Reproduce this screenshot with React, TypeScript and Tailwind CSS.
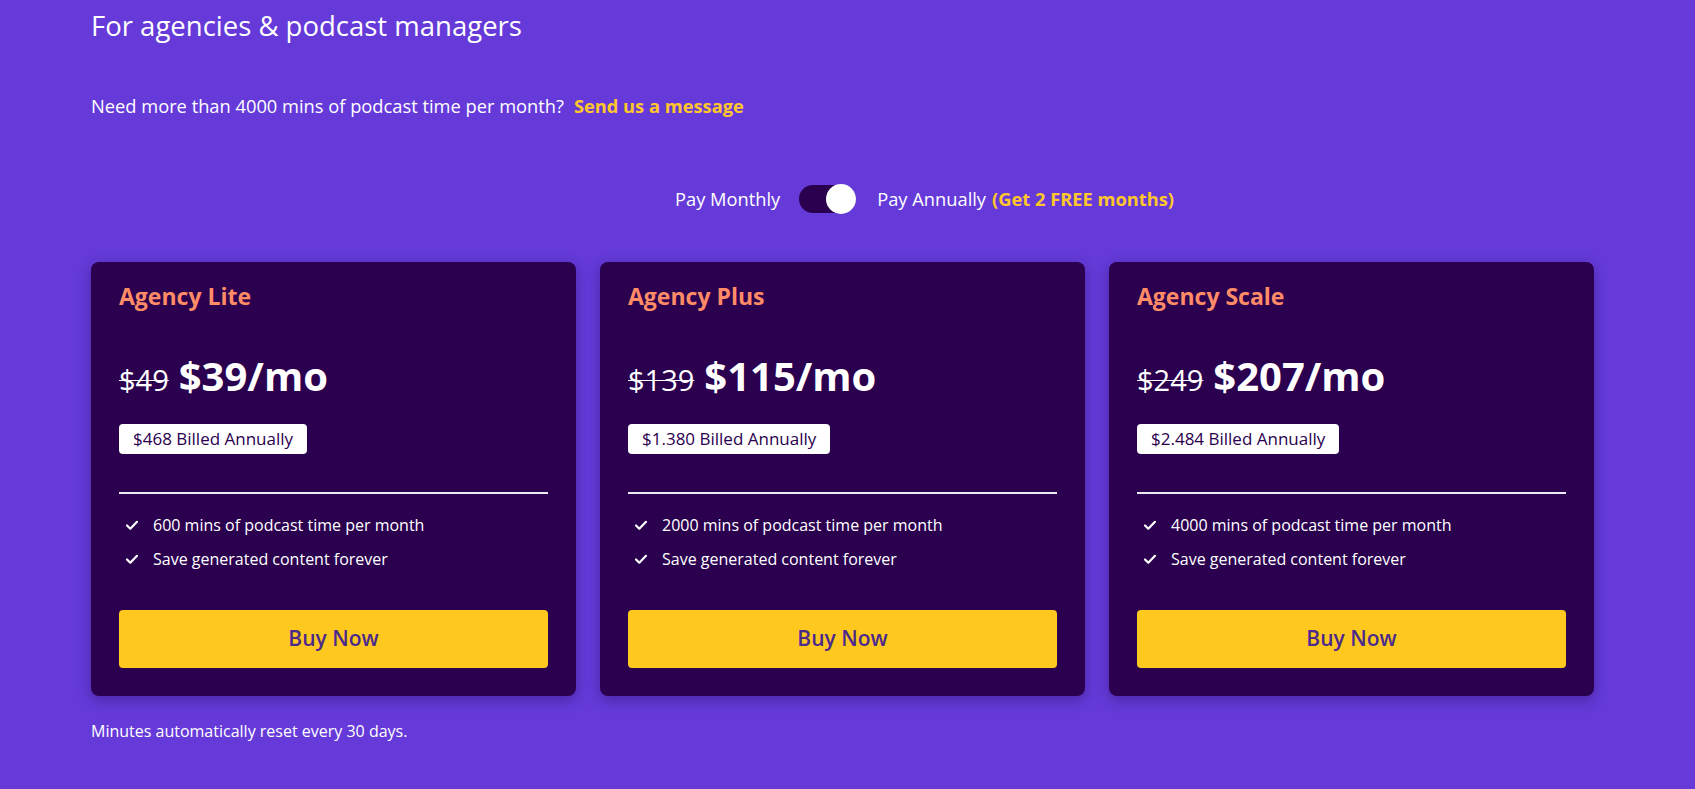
const plans = [
  { name: "Agency Lite", old: "$49", price: "$39/mo", billed: "$468 Billed Annually", mins: "600" },
  { name: "Agency Plus", old: "$139", price: "$115/mo", billed: "$1.380 Billed Annually", mins: "2000" },
  { name: "Agency Scale", old: "$249", price: "$207/mo", billed: "$2.484 Billed Annually", mins: "4000" },
]

function CheckIcon() {
  return (
    <svg width="14" height="14" viewBox="0 0 14 14" fill="none" className="shrink-0">
      <path d="M2 7.5l3.3 3.2L12 3.8" stroke="white" strokeWidth="2.2" strokeLinecap="round" strokeLinejoin="round" />
    </svg>
  )
}

export default function App() {
  return (
    <div className="min-h-screen w-full bg-[#653ad9] text-white font-['Open_Sans','Lato',sans-serif] pb-12">
      <div className="ml-[91px] w-[1503px] pt-2">

        {/* HEADER */}
        <h1 className="text-[27.5px] leading-[36px] font-normal">For agencies &amp; podcast managers</h1>

        <p className="mt-12 text-[18.3px] leading-7">
          Need more than 4000 mins of podcast time per month?
          <a href="#" className="ml-2.5 font-bold text-[#ffc72c]">Send us a message</a>
        </p>

        {/* TOGGLE */}
        <div className="mt-[64px] flex items-center pl-[584px] text-[18.3px] leading-[30px]">
          <span>Pay Monthly</span>
          <div className="relative ml-[19px] h-7 w-[57px] rounded-full bg-[#2a004f]">
            <div className="absolute -top-px right-0 h-[30px] w-[30px] rounded-full bg-white"></div>
          </div>
          <span className="ml-[21px]">Pay Annually</span>
          <span className="ml-1.5 font-bold text-[#ffc72c]">(Get 2 FREE months)</span>
        </div>

        {/* CARDS */}
        <div className="mt-12 grid grid-cols-3 gap-6">
          {plans.map((p) => (
            <div key={p.name} className="rounded-lg bg-[#2a004f] px-7 pt-[18px] pb-7 shadow-[0_4px_14px_rgba(20,0,60,0.35)]">
              <h3 className="text-[23px] leading-8 font-bold text-[#ff8c66]">{p.name}</h3>

              <div className="mt-[44px] flex items-baseline leading-none">
                <span className="text-[29px] line-through decoration-1">{p.old}</span>
                <span className="ml-2.5 text-[40px] font-bold">{p.price}</span>
              </div>

              <div className="mt-[28px]">
                <span className="inline-block rounded bg-white px-[14px] py-[3px] text-[17px] leading-6 text-[#2a004f]">
                  {p.billed}
                </span>
              </div>

              <div className="mt-[38px] h-[2px] bg-[#eeeaf5]"></div>

              <ul className="mt-[19px] flex flex-col gap-2.5 text-[16px] leading-6">
                <li className="flex items-center gap-[14px] pl-1.5">
                  <CheckIcon />
                  {p.mins} mins of podcast time per month
                </li>
                <li className="flex items-center gap-[14px] pl-1.5">
                  <CheckIcon />
                  Save generated content forever
                </li>
              </ul>

              <button className="mt-[39px] h-[58px] w-full rounded bg-[#ffc81e] text-[21px] font-semibold text-[#4b2a8c]">
                Buy Now
              </button>
            </div>
          ))}
        </div>

        <p className="mt-[25px] text-[16px] leading-5">Minutes automatically reset every 30 days.</p>
      </div>
    </div>
  )
}
